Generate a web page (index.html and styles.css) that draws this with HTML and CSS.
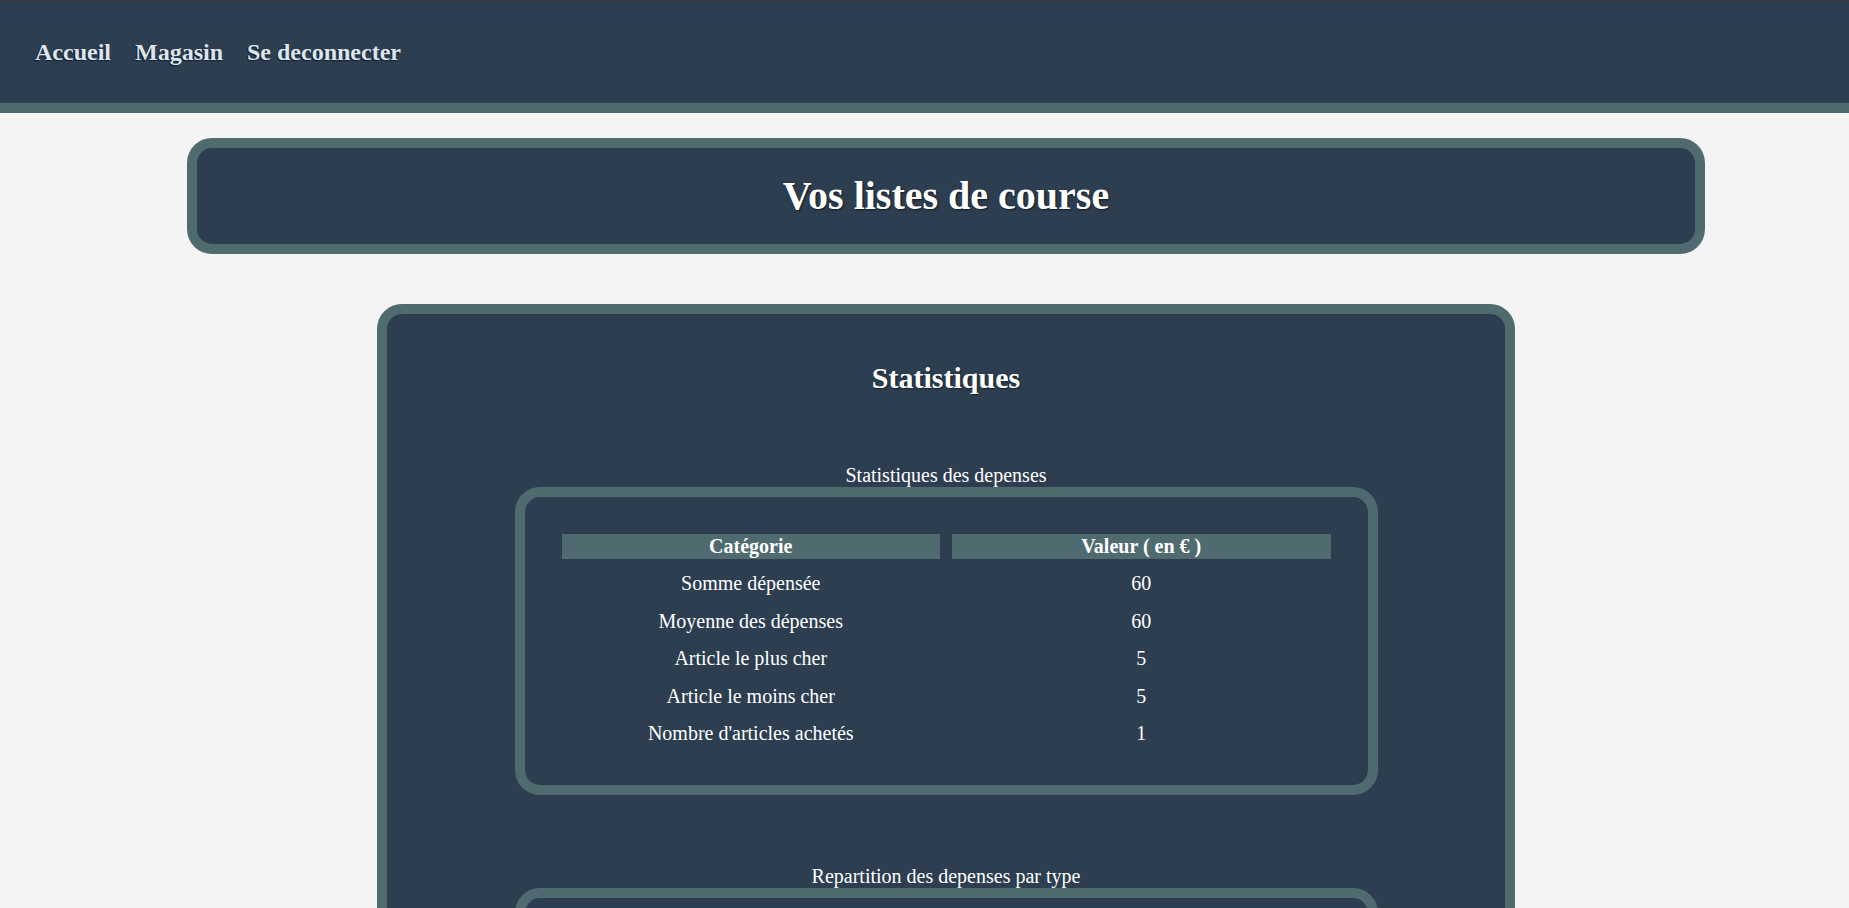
FILE: index.html
```html
<!DOCTYPE html>
<html lang="fr">
<head>
<meta charset="utf-8">
<title>Vos listes de course</title>
<link rel="stylesheet" href="styles.css">
</head>
<body>
<header class="topbar">
  <nav class="nav">
    <a class="nav-link" href="#">Accueil</a>
    <a class="nav-link" href="#">Magasin</a>
    <a class="nav-link" href="#">Se deconnecter</a>
  </nav>
</header>
<main class="main">
  <section class="title-box">
    <h1 class="title">Vos listes de course</h1>
  </section>
  <section class="stats">
    <h2 class="stats-title">Statistiques</h2>
    <div class="stat-block">
      <p class="stat-label">Statistiques des depenses</p>
      <div class="table-box">
        <table class="stat-table">
          <thead>
            <tr><th>Catégorie</th><th>Valeur ( en € )</th></tr>
          </thead>
          <tbody>
            <tr><td>Somme dépensée</td><td>60</td></tr>
            <tr><td>Moyenne des dépenses</td><td>60</td></tr>
            <tr><td>Article le plus cher</td><td>5</td></tr>
            <tr><td>Article le moins cher</td><td>5</td></tr>
            <tr><td>Nombre d'articles achetés</td><td>1</td></tr>
          </tbody>
        </table>
      </div>
    </div>
    <div class="stat-block">
      <p class="stat-label">Repartition des depenses par type</p>
      <div class="table-box">
        <table class="stat-table">
          <thead>
            <tr><th>Type</th><th>Valeur ( en € )</th></tr>
          </thead>
          <tbody>
            <tr><td>Alimentaire</td><td>60</td></tr>
          </tbody>
        </table>
      </div>
    </div>
  </section>
</main>
</body>
</html>
```

FILE: styles.css
```css
html, body {
  margin: 0;
  padding: 0;
}

body {
  background: #f4f4f4;
  font-family: "Liberation Serif", "Times New Roman", serif;
  color: #ffffff;
}

.topbar {
  background: #2c3e50;
  border-top: 1px solid #3b3a36;
  border-bottom: 10px solid #4f6b70;
  height: 102px;
  display: flex;
  align-items: center;
}

.nav {
  display: flex;
  gap: 24px;
  padding-left: 35px;
}

.nav-link {
  color: #dfe4ea;
  text-decoration: none;
  font-weight: bold;
  font-size: 24px;
  text-shadow: -1px 1px 1px rgba(10, 20, 35, 0.8);
}

.main {
  padding-left: 43px;
  padding-top: 25px;
}

.title-box {
  box-sizing: border-box;
  width: 1518px;
  margin: 0 auto;
  background: #2c3e50;
  border: 10px solid #4f6b70;
  border-radius: 25px;
  padding: 25px 0;
  text-align: center;
}

.title {
  margin: 0;
  font-size: 40px;
  line-height: 46px;
  font-weight: bold;
  color: #ffffff;
  text-shadow: 1px 1px 2px rgba(0, 0, 0, 0.6);
}

.stats {
  box-sizing: border-box;
  width: 1138px;
  margin: 50px auto 0;
  background: #2c3e50;
  border: 10px solid #4f6b70;
  border-radius: 25px;
  padding: 47px 0 40px;
  text-align: center;
}

.stats-title {
  margin: 0 0 69px;
  font-size: 30px;
  line-height: 34px;
  font-weight: bold;
  text-shadow: 1px 1px 2px rgba(0, 0, 0, 0.5);
}

.stat-block {
  margin-bottom: 70px;
}

.stat-label {
  margin: 0;
  font-size: 20px;
  line-height: 23px;
}

.table-box {
  box-sizing: border-box;
  width: 863px;
  margin: 0 auto;
  border: 10px solid #4f6b70;
  border-radius: 25px;
  padding: 25px 25px 26px;
}

.stat-table {
  width: 100%;
  table-layout: fixed;
  border-spacing: 12px;
  font-size: 20px;
  line-height: 23px;
}

.stat-table th,
.stat-table td {
  padding: 1px;
  text-align: center;
}

.stat-table td {
  line-height: 23.6px;
}

.stat-table th {
  background: #4f6b70;
  font-weight: bold;
}
```
